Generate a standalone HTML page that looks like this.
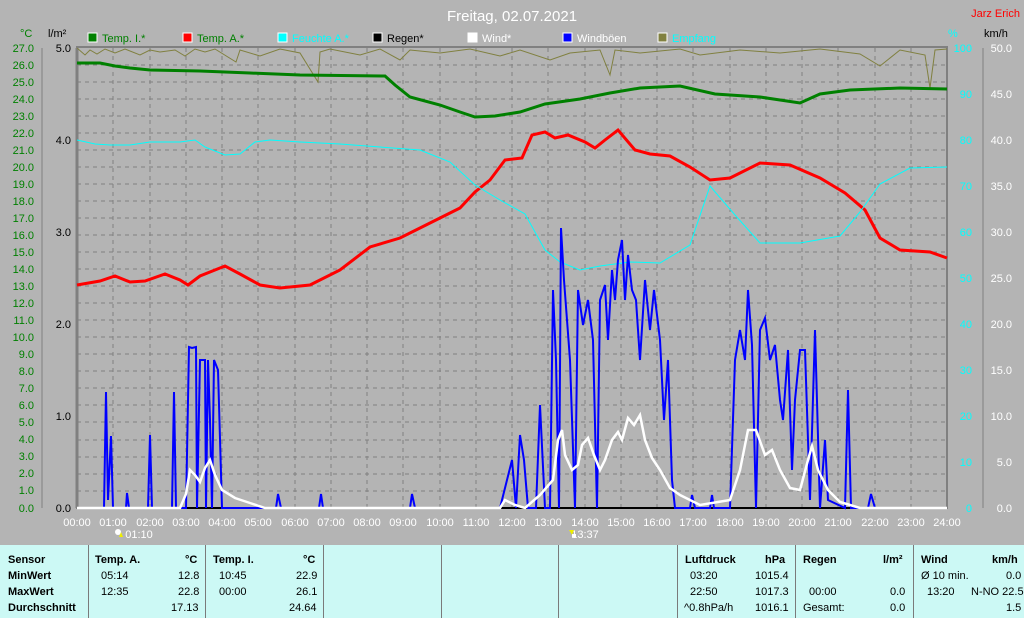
<!DOCTYPE html><html><head><style>
body{margin:0;width:1024px;height:618px;overflow:hidden;background:#b4b4b4;font-family:"Liberation Sans",sans-serif}
svg{position:absolute;left:0;top:0}
.t{position:absolute;top:545px;height:73px;background:#ccf9f5;font-size:11px;color:#000}
.c{position:absolute;top:545px;height:73px;border-left:1px solid #7a7a7a}
.r{position:absolute;font-size:11px;white-space:nowrap}
.b{font-weight:bold}
</style></head><body>
<svg width="1024" height="545" font-family="Liberation Sans, sans-serif" font-size="11">
<text x="512" y="21" fill="#fff" font-size="15" text-anchor="middle">Freitag, 02.07.2021</text>
<text x="1020" y="17" fill="#f00" font-size="11" text-anchor="end">Jarz Erich</text>
<g font-size="11">
<rect x="88" y="33" width="9" height="9" fill="#008000" stroke="#fff"/><text x="102" y="42" fill="#008000">Temp. I.*</text>
<rect x="183" y="33" width="9" height="9" fill="#f00" stroke="#fff"/><text x="197" y="42" fill="#008000">Temp. A.*</text>
<rect x="278" y="33" width="9" height="9" fill="#0ff" stroke="#fff"/><text x="292" y="42" fill="#0ff">Feuchte A.*</text>
<rect x="373" y="33" width="9" height="9" fill="#000" stroke="#fff"/><text x="387" y="42" fill="#000">Regen*</text>
<rect x="468" y="33" width="9" height="9" fill="#fff" stroke="#fff"/><text x="482" y="42" fill="#fff">Wind*</text>
<rect x="563" y="33" width="9" height="9" fill="#00f" stroke="#fff"/><text x="577" y="42" fill="#fff">Windböen</text>
<rect x="658" y="33" width="9" height="9" fill="#808040" stroke="#fff"/><text x="672" y="42" fill="#0ff">Empfang</text>
<text x="20" y="37" fill="#008000">°C</text><text x="48" y="37" fill="#000">l/m²</text>
<text x="948" y="37" fill="#0ff">%</text><text x="984" y="37" fill="#000">km/h</text>
</g>
<g stroke="#808080" stroke-dasharray="4,4" stroke-width="1">
<path d="M113 48V508M150 48V508M186 48V508M222 48V508M258 48V508M295 48V508M331 48V508M367 48V508M403 48V508M440 48V508M476 48V508M512 48V508M548 48V508M585 48V508M621 48V508M657 48V508M693 48V508M730 48V508M766 48V508M802 48V508M838 48V508M875 48V508M911 48V508"/>
<path d="M77 65H947M77 82H947M77 99H947M77 116H947M77 133H947M77 150H947M77 167H947M77 184H947M77 201H947M77 218H947M77 235H947M77 252H947M77 269H947M77 286H947M77 303H947M77 320H947M77 337H947M77 354H947M77 371H947M77 388H947M77 405H947M77 422H947M77 440H947M77 457H947M77 474H947M77 491H947"/>
</g>
<path d="M77 48V508" stroke="#808080" stroke-width="3"/>
<rect x="77" y="47" width="870" height="461" fill="none" stroke="#808080" stroke-width="2"/>
<line x1="77" y1="508" x2="947" y2="508" stroke="#000" stroke-width="2"/>
<g fill="#008000" text-anchor="end" font-size="11">
<text x="34" y="52">27.0</text><text x="34" y="69">26.0</text><text x="34" y="86">25.0</text><text x="34" y="103">24.0</text><text x="34" y="120">23.0</text><text x="34" y="137">22.0</text><text x="34" y="154">21.0</text><text x="34" y="171">20.0</text><text x="34" y="188">19.0</text><text x="34" y="205">18.0</text><text x="34" y="222">17.0</text><text x="34" y="239">16.0</text><text x="34" y="256">15.0</text><text x="34" y="273">14.0</text><text x="34" y="290">13.0</text><text x="34" y="307">12.0</text><text x="34" y="324">11.0</text><text x="34" y="341">10.0</text><text x="34" y="358">9.0</text><text x="34" y="375">8.0</text><text x="34" y="392">7.0</text><text x="34" y="409">6.0</text><text x="34" y="426">5.0</text><text x="34" y="443">4.0</text><text x="34" y="460">3.0</text><text x="34" y="477">2.0</text><text x="34" y="494">1.0</text><text x="34" y="512">0.0</text>
</g>
<line x1="42" y1="48" x2="42" y2="508" stroke="#808080"/>
<g fill="#000" text-anchor="end"><text x="71" y="52">5.0</text><text x="71" y="144">4.0</text><text x="71" y="236">3.0</text><text x="71" y="328">2.0</text><text x="71" y="420">1.0</text><text x="71" y="512">0.0</text></g>
<g fill="#0ff" text-anchor="end"><text x="972" y="52">100</text><text x="972" y="98">90</text><text x="972" y="144">80</text><text x="972" y="190">70</text><text x="972" y="236">60</text><text x="972" y="282">50</text><text x="972" y="328">40</text><text x="972" y="374">30</text><text x="972" y="420">20</text><text x="972" y="466">10</text><text x="972" y="512">0</text></g>
<line x1="983" y1="48" x2="983" y2="508" stroke="#808080"/>
<g fill="#fff" text-anchor="end"><text x="1012" y="52">50.0</text><text x="1012" y="98">45.0</text><text x="1012" y="144">40.0</text><text x="1012" y="190">35.0</text><text x="1012" y="236">30.0</text><text x="1012" y="282">25.0</text><text x="1012" y="328">20.0</text><text x="1012" y="374">15.0</text><text x="1012" y="420">10.0</text><text x="1012" y="466">5.0</text><text x="1012" y="512">0.0</text></g>
<g fill="#fff" text-anchor="middle"><text x="77" y="526">00:00</text><text x="113" y="526">01:00</text><text x="150" y="526">02:00</text><text x="186" y="526">03:00</text><text x="222" y="526">04:00</text><text x="258" y="526">05:00</text><text x="295" y="526">06:00</text><text x="331" y="526">07:00</text><text x="367" y="526">08:00</text><text x="403" y="526">09:00</text><text x="440" y="526">10:00</text><text x="476" y="526">11:00</text><text x="512" y="526">12:00</text><text x="548" y="526">13:00</text><text x="585" y="526">14:00</text><text x="621" y="526">15:00</text><text x="657" y="526">16:00</text><text x="693" y="526">17:00</text><text x="730" y="526">18:00</text><text x="766" y="526">19:00</text><text x="802" y="526">20:00</text><text x="838" y="526">21:00</text><text x="875" y="526">22:00</text><text x="911" y="526">23:00</text><text x="947" y="526">24:00</text>
<text x="139" y="538">01:10</text><text x="585" y="538">13:37</text></g>
<circle cx="118" cy="532" r="3" fill="#fff"/><path d="M119 537l2-5 2 5z" fill="#ee0"/>
<path d="M569 530l3 5 2-5z" fill="#ee0"/><rect x="572" y="534" width="4" height="3" fill="#fff"/>
<polyline fill="none" stroke="#808040" stroke-width="1" points="77,48 85,55 90,50 97,54 105,49 115,53 125,49 140,55 150,50 160,52 175,50 185,56 195,49 205,52 215,49 236,62 240,50 260,56 280,49 300,53 318,82 320,52 330,49 360,55 380,49 400,60 410,50 440,53 470,49 500,56 520,50 550,60 570,53 600,50 610,75 615,50 640,53 680,49 700,55 740,50 780,53 820,49 860,54 880,66 900,50 925,55 930,88 935,50 947,49"/>
<polyline fill="none" stroke="#008000" stroke-width="3" points="77,63 100,63 115,66 130,68 150,70 200,71 250,73 300,75 385,76 395,85 410,97 440,105 460,112 475,117 495,116 520,112 545,104 580,99 610,93 640,88 680,86 715,94 760,97 800,103 820,94 850,90 900,88 947,89"/>
<polyline fill="none" stroke="#f00" stroke-width="3" points="77,285 100,281 115,276 130,282 145,281 165,274 180,280 188,285 200,276 225,266 240,274 260,285 280,288 310,285 340,270 370,247 400,238 420,228 440,218 460,208 475,192 490,180 505,160 522,158 532,135 545,132 555,138 568,135 585,142 595,148 605,140 618,130 635,150 650,154 670,156 690,167 710,180 730,178 760,163 790,165 820,178 845,193 865,210 880,238 900,250 930,252 947,258"/>
<polyline fill="none" stroke="#0ff" stroke-width="1" points="77,140 95,144 110,145 130,145 150,142 180,142 195,140 205,147 225,155 240,154 255,142 270,140 300,142 340,144 380,147 420,150 450,162 475,185 500,200 525,214 545,250 560,262 580,270 600,266 630,262 660,263 690,245 710,186 735,215 760,243 800,243 840,236 860,212 880,184 910,168 947,167"/>
<polyline fill="none" stroke="#00f" stroke-width="2" points="77,508 104,508 106,392 108,500 111,436 113,508 126,508 127,493 129,508 148,508 150,435 152,508 172,508 174,392 176,508 186,508 189,347 192,348 196,347 197,508 200,360 205,360 206,508 208,360 210,420 212,508 214,360 218,370 222,508 276,508 278,494 281,508 319,508 321,494 323,508 410,508 412,494 415,508 500,508 512,460 516,508 520,435 524,460 528,508 536,508 540,405 545,508 550,508 553,290 556,360 559,508 561,228 564,280 570,360 575,508 578,290 583,325 588,300 593,340 597,508 600,300 605,285 608,340 612,270 615,300 618,260 622,240 625,300 628,255 632,290 636,300 640,360 645,280 650,330 654,290 660,340 664,420 668,360 672,480 675,508 690,508 692,495 695,508 710,508 712,495 714,508 730,508 735,360 740,330 745,360 748,290 752,345 756,508 760,330 765,318 770,360 775,345 780,400 783,420 788,350 792,470 795,400 800,350 805,350 810,500 815,330 820,508 825,440 828,500 845,508 848,390 851,508 868,508 871,494 875,508"/>
<polyline fill="none" stroke="#fff" stroke-width="2.5" points="77,508 180,508 186,494 190,470 195,475 200,482 205,468 210,460 215,475 222,490 235,498 250,503 265,508 500,508 505,500 515,505 525,508 540,495 553,480 558,440 562,430 565,455 572,470 578,465 582,445 588,438 594,455 600,470 605,460 612,440 618,432 622,440 628,418 634,425 640,415 645,440 652,458 660,470 670,488 680,495 690,500 700,505 730,500 740,470 748,430 756,430 765,455 772,450 780,470 790,488 800,490 808,460 812,446 818,470 828,490 840,502 860,508 947,508"/>
</svg>
<div class="t" style="left:0;width:1024px"></div>
<div class="c" style="left:88px"></div><div class="c" style="left:205px"></div><div class="c" style="left:323px"></div><div class="c" style="left:441px"></div><div class="c" style="left:558px"></div><div class="c" style="left:677px"></div><div class="c" style="left:795px"></div><div class="c" style="left:913px"></div>
<div class="r b" style="left:8px;top:554px">Sensor</div><div class="r b" style="left:8px;top:570px">MinWert</div><div class="r b" style="left:8px;top:586px">MaxWert</div><div class="r b" style="left:8px;top:602px">Durchschnitt</div>
<div class="r b" style="left:95px;top:554px">Temp. A.</div><div class="r b" style="left:185px;top:554px">°C</div>
<div class="r" style="left:101px;top:570px">05:14</div><div class="r" style="left:178px;top:570px">12.8</div>
<div class="r" style="left:101px;top:586px">12:35</div><div class="r" style="left:178px;top:586px">22.8</div>
<div class="r" style="left:171px;top:602px">17.13</div>
<div class="r b" style="left:213px;top:554px">Temp. I.</div><div class="r b" style="left:303px;top:554px">°C</div>
<div class="r" style="left:219px;top:570px">10:45</div><div class="r" style="left:296px;top:570px">22.9</div>
<div class="r" style="left:219px;top:586px">00:00</div><div class="r" style="left:296px;top:586px">26.1</div>
<div class="r" style="left:289px;top:602px">24.64</div>
<div class="r b" style="left:685px;top:554px">Luftdruck</div><div class="r b" style="left:765px;top:554px">hPa</div>
<div class="r" style="left:690px;top:570px">03:20</div><div class="r" style="left:755px;top:570px">1015.4</div>
<div class="r" style="left:690px;top:586px">22:50</div><div class="r" style="left:755px;top:586px">1017.3</div>
<div class="r" style="left:684px;top:602px">^0.8hPa/h</div><div class="r" style="left:755px;top:602px">1016.1</div>
<div class="r b" style="left:803px;top:554px">Regen</div><div class="r b" style="left:883px;top:554px">l/m²</div>
<div class="r" style="left:809px;top:586px">00:00</div><div class="r" style="left:890px;top:586px">0.0</div>
<div class="r" style="left:803px;top:602px">Gesamt:</div><div class="r" style="left:890px;top:602px">0.0</div>
<div class="r b" style="left:921px;top:554px">Wind</div><div class="r b" style="left:992px;top:554px">km/h</div>
<div class="r" style="left:921px;top:570px">Ø 10 min.</div><div class="r" style="left:1006px;top:570px">0.0</div>
<div class="r" style="left:927px;top:586px">13:20</div><div class="r" style="left:971px;top:586px">N-NO 22.5</div>
<div class="r" style="left:1006px;top:602px">1.5</div>
</body></html>
